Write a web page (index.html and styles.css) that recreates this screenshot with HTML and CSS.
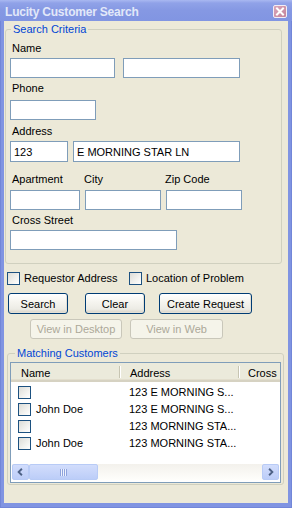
FILE: index.html
```html
<!DOCTYPE html>
<html lang="en">
<head>
  <meta charset="UTF-8" />
  <title>Lucity Customer Search</title>
  <link rel="stylesheet" href="styles.css">
</head>
<body>
  <div class="window">
    <div class="titlebar">
      <span class="title">Lucity Customer Search</span>
      <span class="close">
        <svg viewBox="0 0 12 11" width="12" height="11">
          <path d="M3 2.5 L9 8.5 M9 2.5 L3 8.5" stroke="#fff" stroke-width="2" stroke-linecap="square"/>
        </svg>
      </span>
    </div>

    <div class="content">
      <fieldset class="group criteria">
        <legend>Search Criteria</legend>

        <div class="label label-name">Name</div>
        <div class="inputs inputs-name">
          <input type="text" class="w-first">
          <input type="text" class="w-last">
        </div>

        <div class="label label-phone">Phone</div>
        <div class="inputs inputs-phone">
          <input type="text" class="w-phone">
        </div>

        <div class="label label-address">Address</div>
        <div class="inputs inputs-address">
          <input type="text" class="w-number tall" value="123">
          <input type="text" class="w-street tall" value="E MORNING STAR LN">
        </div>

        <div class="label label-apt">
          <span class="col-apt">Apartment</span>
          <span class="col-city">City</span>
          <span>Zip Code</span>
        </div>
        <div class="inputs inputs-apt">
          <input type="text" class="w-apt">
          <input type="text" class="w-city">
          <input type="text" class="w-zip">
        </div>

        <div class="label label-cross">Cross Street</div>
        <div class="inputs inputs-cross">
          <input type="text" class="w-cross">
        </div>
      </fieldset>

      <div class="checks">
        <label class="check check-first"><span class="box"></span>Requestor Address</label>
        <label class="check"><span class="box"></span>Location of Problem</label>
      </div>

      <div class="actions">
        <button class="btn btn-search">Search</button>
        <button class="btn btn-clear">Clear</button>
        <button class="btn btn-create">Create Request</button>
      </div>

      <div class="actions actions-view">
        <button class="btn btn-desktop" disabled>View in Desktop</button>
        <button class="btn btn-web" disabled>View in Web</button>
      </div>

      <fieldset class="group matches">
        <legend>Matching Customers</legend>
        <div class="listview">
          <div class="list-header">
            <span class="hcol hcol-name">Name</span>
            <span class="hcol hcol-address">Address</span>
            <span class="hcol hcol-cross">Cross</span>
          </div>
          <div class="list-rows">
            <div class="list-row"><span class="cell-name"><span class="box"></span></span><span>123 E MORNING S...</span></div>
            <div class="list-row"><span class="cell-name"><span class="box"></span>John Doe</span><span>123 E MORNING S...</span></div>
            <div class="list-row"><span class="cell-name"><span class="box"></span></span><span>123 MORNING STA...</span></div>
            <div class="list-row"><span class="cell-name"><span class="box"></span>John Doe</span><span>123 MORNING STA...</span></div>
          </div>
          <div class="hscroll">
            <span class="sbtn">
              <svg viewBox="0 0 16 16" width="16" height="16"><path d="M9.5 4.5 L6 8 L9.5 11.5" fill="none" stroke="#4d6185" stroke-width="2"/></svg>
            </span>
            <span class="thumb"><span class="grip"></span></span>
            <span class="track"></span>
            <span class="sbtn">
              <svg viewBox="0 0 16 16" width="16" height="16"><path d="M6.5 4.5 L10 8 L6.5 11.5" fill="none" stroke="#4d6185" stroke-width="2"/></svg>
            </span>
          </div>
        </div>
      </fieldset>
    </div>
  </div>
</body>
</html>
```

FILE: styles.css
```css
:root {
  --frame: #8094e2;
  --face: #ece9d8;
  --group-line: #d0d0bf;
  --legend: #0046d5;
  --field-border: #7f9db9;
  --btn-border: #003c74;
}

* {
  box-sizing: border-box;
}

body {
  margin: 0;
  font-family: 'Liberation Sans', Arial, sans-serif;
  font-size: 11px;
  color: #000;
}

.window {
  width: 292px;
  height: 508px;
  display: flex;
  flex-direction: column;
  background: var(--frame);
  padding: 0 4px 4px 4px;
  border-left: 1px solid #7286d8;
  border-right: 1px solid #7286d8;
  border-bottom: 1px solid #7286d8;
}

/* barra de titulo */
.titlebar {
  height: 21px;
  margin: 0 -5px;
  padding: 0 5px 0 5px;
  display: flex;
  align-items: center;
  justify-content: space-between;
  background: linear-gradient(#a9b8f1 0, #90a2e8 3px, #8598e3 50%, #8195e2 100%);
}

.title {
  font-weight: bold;
  font-size: 12px;
  letter-spacing: -0.2px;
  color: #e2e8f9;
  padding-top: 2px;
}

.close {
  width: 14px;
  height: 13px;
  margin-top: 1px;
  border: 1px solid #f2eef6;
  border-radius: 2px;
  background: linear-gradient(135deg, #d9a6b9, #c4849b);
  display: flex;
  align-items: center;
  justify-content: center;
}

.close svg {
  display: block;
}

.content {
  flex: 1;
  background: var(--face);
  padding-top: 2px;
  display: flex;
  flex-direction: column;
  margin: 0 -1px;
}

/* group boxes */
.group {
  margin: 0;
  border: 1px solid var(--group-line);
  border-radius: 3px;
  min-width: 0;
}

.group legend {
  color: var(--legend);
  line-height: 13px;
  padding: 0 2px;
}

.criteria {
  margin: 0 6px 0 1px;
  padding: 0 0 13px 4px;
}

.criteria legend {
  margin-left: 1px;
}

.label {
  line-height: 13px;
  padding-left: 2px;
}

.label-name { margin-top: 6px; }
.label-phone { margin-top: 4px; }
.label-address { margin-top: 5px; }
.label-apt { margin-top: 11px; display: flex; }
.label-cross { margin-top: 4px; }

.col-apt { width: 72px; }
.col-city { width: 81px; }

.inputs {
  display: flex;
  gap: 5px;
}

.inputs-name { margin-top: 3px; gap: 8px; }
.inputs-phone { margin-top: 5px; }
.inputs-address { margin-top: 3px; }
.inputs-apt { margin-top: 4px; }
.inputs-cross { margin-top: 3px; }

.inputs input {
  height: 20px;
  border: 1px solid var(--field-border);
  background: #fff;
  font-family: inherit;
  font-size: 11px;
  padding: 0 3px;
  margin: 0;
  color: #000;
  border-radius: 0;
  outline: none;
}

.inputs input.tall { height: 21px; }

.w-first { width: 105px; }
.w-last { width: 117px; }
.w-phone { width: 86px; }
.w-number { width: 58px; }
.w-street { width: 167px; }
.w-apt { width: 70px; }
.w-city { width: 76px; }
.w-zip { width: 76px; }
.w-cross { width: 167px; }

/* casillas */
.box {
  display: inline-block;
  width: 13px;
  height: 13px;
  flex: none;
  border: 1px solid #1c5180;
  background: linear-gradient(135deg, #dcdcd7 0%, #f2f2ef 60%, #fff 100%);
}

.checks {
  display: flex;
  margin-top: 8px;
  padding-left: 3px;
  height: 13px;
}

.check {
  display: flex;
  align-items: center;
  gap: 4px;
  line-height: 13px;
}

.check-first {
  width: 122px;
}

/* botones */
.actions {
  display: flex;
  margin-top: 8px;
  padding-left: 4px;
}

.btn {
  height: 21px;
  padding: 0;
  font-family: inherit;
  font-size: 11px;
  color: #000;
  border: 1px solid var(--btn-border);
  border-radius: 3px;
  background: linear-gradient(#ffffff 0%, #f6f5f0 40%, #ecebe4 80%, #d6d0c5 100%);
  box-shadow: inset -1px -1px 0 #e3e0d6;
}

.btn-search { width: 60px; }
.btn-clear { width: 60px; margin-left: 17px; }
.btn-create { width: 93px; margin-left: 14px; }

.actions-view {
  margin-top: 5px;
  padding-left: 26px;
}

.btn:disabled {
  height: 20px;
  color: #aca899;
  border-color: #c9c7ba;
  background: #f5f4ea;
  box-shadow: none;
}

.btn-desktop { width: 92px; }
.btn-web { width: 93px; margin-left: 8px; }

/* lista de resultados */
.matches {
  margin: 8px 4px 0 3px;
  padding: 0 2px 1px 2px;
}

.matches legend {
  margin-left: 5px;
}

.listview {
  margin-top: 2px;
  height: 121px;
  border: 1px solid var(--field-border);
  background: #fff;
  display: flex;
  flex-direction: column;
}

.list-header {
  display: flex;
  height: 19px;
  padding-top: 4px;
  line-height: 13px;
  background: #ebeadb;
  border-bottom: 2px solid #d6d2c2;
  box-shadow: 0 -1px 0 #e2decd inset;
}

.hcol-name { width: 109px; padding-left: 10px; border-right: 1px solid #c7c5b2; box-shadow: 1px 0 0 #fff; }
.hcol-address { width: 119px; padding-left: 10px; border-right: 1px solid #c7c5b2; box-shadow: 1px 0 0 #fff; }
.hcol-cross { padding-left: 9px; }

.hcol-name,
.hcol-address {
  height: 12px;
  margin-top: -1px;
  line-height: 14px;
}

.list-rows {
  flex: 1;
  margin-top: 2px;
}

.list-row {
  display: flex;
  align-items: center;
  height: 17px;
  line-height: 17px;
}

.cell-name {
  width: 118px;
  padding-left: 7px;
  display: flex;
  align-items: center;
  gap: 5px;
}

.hscroll {
  display: flex;
  height: 16px;
  margin: 0 1px 2px 1px;
  background: linear-gradient(#f3f1ec, #fefefb);
}

.sbtn,
.thumb {
  display: flex;
  align-items: center;
  justify-content: center;
  height: 16px;
  border: 1px solid #b8cbf6;
  border-radius: 2px;
  background: linear-gradient(#d2ddfc, #bccdf8);
}

.sbtn {
  width: 17px;
}

.thumb {
  width: 69px;
}

.grip {
  width: 7px;
  height: 7px;
  background: repeating-linear-gradient(90deg, #8ea3dd 0 1px, #eef2fd 1px 2px);
}

.track {
  flex: 1;
}
```
